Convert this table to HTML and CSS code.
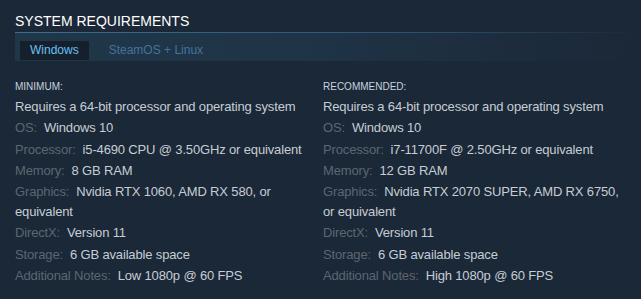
FILE: index.html
```html
<!DOCTYPE html>
<html>
<head>
<meta charset="utf-8">
<link rel="stylesheet" href="styles.css">
</head>
<body>
<div class="sysreq">
  <h2 class="title">System Requirements</h2>
  <div class="tabs">
    <div class="tab active">Windows</div>
    <div class="tab">SteamOS + Linux</div>
  </div>
  <div class="cols">
    <div class="col">
      <div class="head">Minimum:</div>
      <ul class="list">
        <li>Requires a 64-bit processor and operating system</li>
        <li><span class="lbl">OS:</span>&nbsp; <span class="val">Windows 10</span></li>
        <li><span class="lbl">Processor:</span>&nbsp; <span class="val">i5-4690 CPU @ 3.50GHz or equivalent</span></li>
        <li><span class="lbl">Memory:</span>&nbsp; <span class="val">8 GB RAM</span></li>
        <li><span class="lbl">Graphics:</span>&nbsp; <span class="val">Nvidia RTX 1060, AMD RX 580, or equivalent</span></li>
        <li><span class="lbl">DirectX:</span>&nbsp; <span class="val">Version 11</span></li>
        <li><span class="lbl">Storage:</span>&nbsp; <span class="val">6 GB available space</span></li>
        <li><span class="lbl">Additional Notes:</span>&nbsp; <span class="val">Low 1080p @ 60 FPS</span></li>
      </ul>
    </div>
    <div class="col">
      <div class="head">Recommended:</div>
      <ul class="list">
        <li>Requires a 64-bit processor and operating system</li>
        <li><span class="lbl">OS:</span>&nbsp; <span class="val">Windows 10</span></li>
        <li><span class="lbl">Processor:</span>&nbsp; <span class="val">i7-11700F @ 2.50GHz or equivalent</span></li>
        <li><span class="lbl">Memory:</span>&nbsp; <span class="val">12 GB RAM</span></li>
        <li><span class="lbl">Graphics:</span>&nbsp; <span class="val">Nvidia RTX 2070 SUPER, AMD RX 6750, or equivalent</span></li>
        <li><span class="lbl">DirectX:</span>&nbsp; <span class="val">Version 11</span></li>
        <li><span class="lbl">Storage:</span>&nbsp; <span class="val">6 GB available space</span></li>
        <li><span class="lbl">Additional Notes:</span>&nbsp; <span class="val">High 1080p @ 60 FPS</span></li>
      </ul>
    </div>
  </div>
</div>
</body>
</html>
```

FILE: styles.css
```css
html, body {
  margin: 0;
  padding: 0;
  background: #1b2838;
}
body {
  font-family: "Liberation Sans", Arial, sans-serif;
  width: 641px;
  height: 299px;
  overflow: hidden;
}
.sysreq {
  padding: 0 0 0 15px;
}
.title {
  margin: 0;
  padding-top: 12px;
  height: 20px;
  font-size: 14px;
  font-weight: normal;
  text-transform: uppercase;
  letter-spacing: 0;
  color: #ffffff;
  line-height: 18px;
}
.tabs {
  display: flex;
  align-items: flex-end;
  height: 28px;
  border-top: 1px solid transparent;
  border-image: linear-gradient(to right, #3a6e8f 0%, #2c5573 60%, rgba(27,40,56,0) 100%) 1;
  background: linear-gradient(to right, #203749 0%, #1f3447 45%, #1c2b3c 85%, #1b2838 100%);
}
.tab {
  font-size: 12px;
  height: 19px;
  line-height: 19px;
  padding: 0 10px;
  color: #44739a;
  margin-right: 10px;
  margin-bottom: 1px;
}
.tab.active {
  margin-left: 5px;
  background: #16202d;
  color: #67c1f5;
}
.cols {
  display: grid;
  grid-template-columns: 308px 308px;
  padding-top: 20px;
}
.head {
  font-size: 10px;
  text-transform: uppercase;
  color: #c6d4df;
  line-height: 12px;
  margin-bottom: 4px;
}
.list {
  list-style: none;
  margin: 0;
  padding: 0;
  font-size: 13px;
  line-height: 20px;
  letter-spacing: -0.15px;
  color: #c6cdd4;
}
.list li {
  margin-bottom: 1.3px;
}
.lbl {
  color: #5d6670;
}
```
